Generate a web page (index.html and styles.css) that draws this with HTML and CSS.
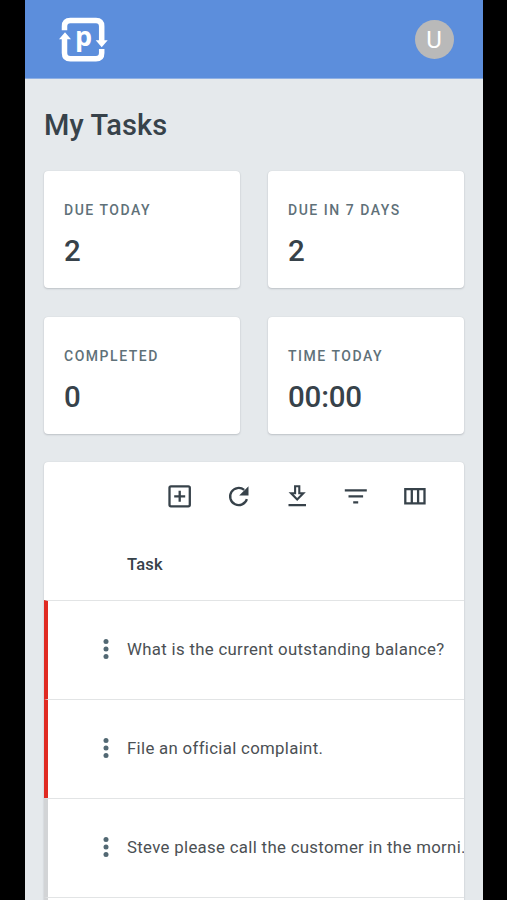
FILE: index.html
```html
<!DOCTYPE html>
<html lang="en">
<head>
<meta charset="utf-8">
<title>My Tasks</title>
<link rel="stylesheet" href="styles.css">
</head>
<body>
<div class="screen">
  <header class="topbar">
    <svg class="logo" width="50" height="48" viewBox="58 15 50 48">
      <g fill="none" stroke="#fff" stroke-width="5.5">
        <path d="M64.5 30.3V26.3Q64.5 20.5 70.3 20.5H96Q101.7 20.5 101.7 26.3V41"/>
        <path d="M64.5 38V53Q64.5 58.8 70.3 58.8H96Q101.7 58.8 101.7 53V49"/>
      </g>
      <path fill="#fff" d="M65 32.3L71 39.3H59ZM101.7 47.3L95.7 40.3H107.7Z"/>
      <text class="logo-letter" x="75" y="45.6">p</text>
    </svg>
    <div class="avatar">U</div>
  </header>
  <main class="content">
    <h1 class="title">My Tasks</h1>
    <section class="stats">
      <div class="card stat"><div class="label">DUE TODAY</div><div class="value">2</div></div>
      <div class="card stat"><div class="label">DUE IN 7 DAYS</div><div class="value">2</div></div>
      <div class="card stat"><div class="label">COMPLETED</div><div class="value">0</div></div>
      <div class="card stat"><div class="label">TIME TODAY</div><div class="value">00:00</div></div>
    </section>
    <section class="card table">
      <div class="toolbar">
        <svg class="icon" viewBox="0 0 28 28"><rect x="3.5" y="4.3" width="20.3" height="20" rx="1.5"/><path d="M13.7 8.8v11M8.2 14.3h11"/></svg>
        <svg class="icon" viewBox="0 0 28 28"><path d="M21.9 17.2A8.6 8.6 0 1 1 19.2 7.9"/><path class="solid" d="M23.5 4.2v9.3h-9.3z"/></svg>
        <svg class="icon" viewBox="0 0 28 28"><path class="arrow" d="M12.1 4.3h4.2v7h4L14.2 17.5 8.1 11.3h4z"/><path d="M5.5 23.2h17.5"/></svg>
        <svg class="icon" viewBox="0 0 28 28"><path d="M2.8 8.4h22M6.5 14.4h14.6M11.2 20.4h5"/></svg>
        <svg class="icon" viewBox="0 0 28 28"><path d="M4.3 7.1h19.2v14.2H4.3zM10.8 6.8v14.5M17.1 6.8v14.5"/></svg>
      </div>
      <div class="thead">Task</div>
      <div class="row overdue">
        <svg class="dots" viewBox="0 0 6 20"><circle cx="3" cy="2.6" r="2.5"/><circle cx="3" cy="10" r="2.5"/><circle cx="3" cy="17.4" r="2.5"/></svg>
        <span class="task">What is the current outstanding balance?</span>
      </div>
      <div class="row overdue">
        <svg class="dots" viewBox="0 0 6 20"><circle cx="3" cy="2.6" r="2.5"/><circle cx="3" cy="10" r="2.5"/><circle cx="3" cy="17.4" r="2.5"/></svg>
        <span class="task">File an official complaint.</span>
      </div>
      <div class="row">
        <svg class="dots" viewBox="0 0 6 20"><circle cx="3" cy="2.6" r="2.5"/><circle cx="3" cy="10" r="2.5"/><circle cx="3" cy="17.4" r="2.5"/></svg>
        <span class="task">Steve please call the customer in the morni...</span>
      </div>
      <div class="row"></div>
    </section>
  </main>
</div>
</body>
</html>
```
FILE: styles.css
```css
* { box-sizing: border-box; }
html, body { margin: 0; height: 900px; overflow: hidden; }
body { background: #000; font-family: Roboto, "Liberation Sans", sans-serif; color: #37424a; }
.screen { width: 458px; height: 900px; margin-left: 25px; background: #e5e9ec; overflow: hidden; }
.topbar {
  height: 79px; padding: 0 29.5px 0 33px; background: #5c8edc;
  border-bottom: 1px solid #8fb0e4;
  display: flex; align-items: center; justify-content: space-between;
}
.logo { display: block; }
.logo-letter { font: 700 27px "Open Sans", sans-serif; fill: #fff; }
.avatar {
  width: 39px; height: 39px; border-radius: 50%; background: #b9b9b9; color: #fff;
  font-size: 24px; line-height: 40px; text-align: center;
}
.content { padding: 0 19px; }
.title { margin: 0; padding-top: 27px; height: 92px; font-size: 29px; line-height: 38px; font-weight: 500; letter-spacing: .1px; }
.stats { display: grid; grid-template-columns: 196px 196px; column-gap: 28px; row-gap: 29px; }
.card { background: #fff; border-radius: 4px; box-shadow: 0 1px 2px rgba(40, 50, 60, .2), 0 0 1px rgba(40, 50, 60, .15); }
.stat { height: 117px; padding: 29px 20px 0; }
.label { font-size: 14px; line-height: 20px; font-weight: 500; letter-spacing: 1.53px; color: #5f7179; white-space: nowrap; }
.value { margin-top: 12px; font-size: 29.5px; line-height: 38px; font-weight: 500; letter-spacing: -.2px; }
.table { margin-top: 28px; width: 420px; height: 480px; overflow: hidden; }
.toolbar { height: 68px; padding: 0 35px 0 0; display: flex; align-items: center; justify-content: flex-end; gap: 30.8px; }
.icon { width: 28px; height: 28px; fill: none; stroke: #37424a; stroke-width: 2.3; }
.icon .solid { fill: #37424a; stroke: none; }
.icon .arrow { stroke-width: 2.1; }
.thead { height: 70px; padding: 23px 0 0 83px; font-size: 16.5px; line-height: 24px; font-weight: 500; letter-spacing: .2px; }
.row {
  height: 99px; border-top: 1px solid #e2e4e5; border-left: 4px solid #d2d4d6;
  padding: 0 0 2px 55px; display: flex; align-items: center; white-space: nowrap;
}
.row.overdue { border-left-color: #e02a22; }
.dots { width: 6px; height: 20px; flex: none; fill: #526873; }
.task { margin: 0 0 1px 18px; font-size: 16.8px; line-height: 24px; letter-spacing: .32px; color: #4b5054; }
```
